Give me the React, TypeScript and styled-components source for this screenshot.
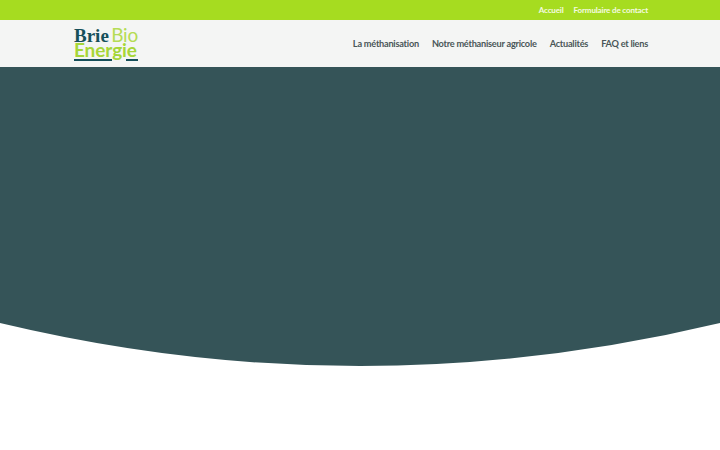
import React from "react";
import styled, { createGlobalStyle } from "styled-components";

const GlobalStyle = createGlobalStyle`
  html, body {
    margin: 0;
    padding: 0;
    background: #fff;
    font-family: "Lato", "Noto Sans", sans-serif;
  }
`;

const Page = styled.div`
  width: 720px;
  height: 450px;
  overflow: hidden;
  background: #fff;
`;

const TopBar = styled.div`
  height: 20px;
  background: #a6dc20;
  display: flex;
  align-items: center;
  justify-content: flex-end;
  gap: 10px;
  padding: 0 72px;
`;

const TopLink = styled.a`
  font-size: 8px;
  font-weight: 700;
  letter-spacing: -0.15px;
  color: #f4fbe0;
  text-decoration: none;
`;

const Header = styled.header`
  height: 47px;
  background: #f4f5f4;
  display: flex;
  align-items: center;
  justify-content: space-between;
  padding: 0 72px 0 74px;
`;

const Logo = styled.div`
  width: 64px;
  display: flex;
  flex-direction: column;
`;

const LogoRow = styled.div`
  display: flex;
  justify-content: space-between;
  align-items: baseline;
  height: 16px;
  line-height: 16px;
`;

const Brie = styled.span`
  font-family: "Liberation Serif", serif;
  font-size: 19px;
  font-weight: 700;
  color: #16505a;
`;

const Bio = styled.span`
  font-family: "Lato", sans-serif;
  font-size: 19px;
  color: #b5dc55;
  letter-spacing: -0.2px;
`;

const Energie = styled.span`
  font-family: "Lato", sans-serif;
  font-size: 19px;
  font-weight: 700;
  line-height: 14px;
  color: #a6d638;
  letter-spacing: -0.1px;
`;

const LogoRules = styled.div`
  display: flex;
  justify-content: space-between;
`;

const LogoRule = styled.div<{ $width: number }>`
  width: ${(p) => p.$width}px;
  height: 2px;
  background: #16505a;
`;

const Nav = styled.nav`
  display: flex;
  gap: 13px;
`;

const NavLink = styled.a`
  font-size: 9.2px;
  font-weight: 700;
  letter-spacing: -0.24px;
  color: #4a5658;
  text-decoration: none;
`;

const Hero = styled.section`
  height: 256px;
  background: #355458;
`;

const Curve = styled.svg`
  display: block;
`;

const App: React.FC = () => {
  return (
    <Page>
      <GlobalStyle />
      <TopBar>
        <TopLink>Accueil</TopLink>
        <TopLink>Formulaire de contact</TopLink>
      </TopBar>
      <Header>
        <Logo>
          <LogoRow>
            <Brie>Brie</Brie>
            <Bio>Bio</Bio>
          </LogoRow>
          <LogoRow>
            <Energie>Energie</Energie>
          </LogoRow>
          <LogoRules>
            <LogoRule $width={38} />
            <LogoRule $width={12} />
          </LogoRules>
        </Logo>
        <Nav>
          <NavLink>La méthanisation</NavLink>
          <NavLink>Notre méthaniseur agricole</NavLink>
          <NavLink>Actualités</NavLink>
          <NavLink>FAQ et liens</NavLink>
        </Nav>
      </Header>
      <Hero />
      <Curve width="720" height="44" viewBox="0 0 720 44">
        <path d="M0 0 Q360 86 720 0 Z" fill="#355458" />
      </Curve>
    </Page>
  );
};

export default App;
